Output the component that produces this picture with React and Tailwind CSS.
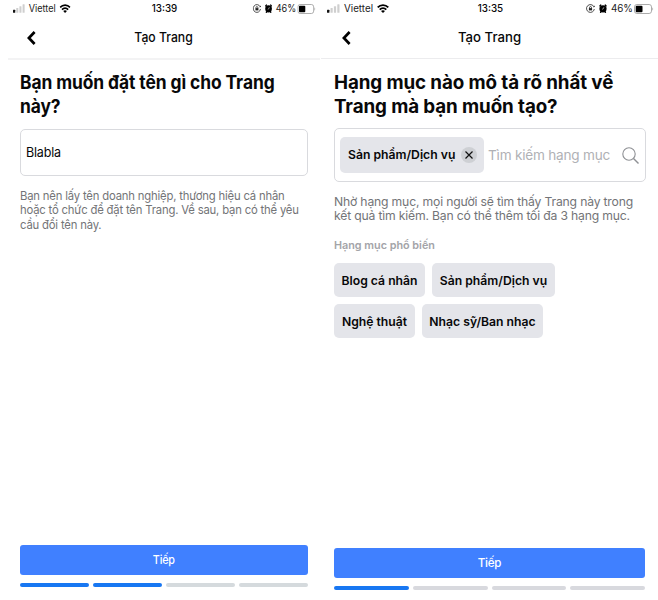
import clsx from 'clsx'

const Signal = () => (
  <svg width="13" height="9" viewBox="0 0 13 9">
    <rect x="0" y="5.8" width="2.4" height="3" rx=".5" fill="#111" />
    <rect x="3.5" y="4" width="2.2" height="4.8" rx=".5" fill="#cfcfcf" />
    <rect x="6.9" y="2.2" width="2.2" height="6.6" rx=".5" fill="#cfcfcf" />
    <rect x="10.3" y="0.3" width="2.2" height="8.5" rx=".5" fill="#cfcfcf" />
  </svg>
)

const Wifi = () => (
  <svg width="12" height="9" viewBox="0 0 12 9" fill="none" stroke="#000" strokeWidth="1.8">
    <path d="M.7 3.3C3.6.3 8.4.3 11.3 3.3" />
    <path d="M2.7 5.6C4.6 3.7 7.4 3.7 9.3 5.6" />
    <path d="M6 9 4 7.1c1.1-1.1 2.9-1.1 4 0z" fill="#000" stroke="none" />
  </svg>
)

const RotationLock = () => (
  <svg width="9" height="9" viewBox="0 0 9 9" fill="none" stroke="#222" strokeWidth=".8">
    <path d="M7.9 2.7A3.9 3.9 0 1 0 8.3 5" />
    <path d="M8.9 3.1 7 3.3 8.3 1.5z" fill="#222" stroke="none" />
    <rect x="2.9" y="4.1" width="3.2" height="2.3" fill="#222" stroke="none" />
    <path d="M3.5 4.2v-.6a1 1 0 0 1 2 0v.6" />
  </svg>
)

const Alarm = () => (
  <svg width="8" height="9" viewBox="0 0 8 9">
    <circle cx="4" cy="4.8" r="3.6" fill="#000" />
    <path d="M.9 1.9 1.8 1.1M7.1 1.9 6.2 1.1M1.6 8.2l.5-.6M6.4 8.2l-.5-.6" stroke="#000" strokeWidth="1.4" strokeLinecap="round" />
    <path d="M4.9 3.2 4.1 5l-1 .3" stroke="#ddd" strokeWidth=".6" fill="none" />
  </svg>
)

const Battery = () => (
  <svg width="20" height="10" viewBox="0 0 20 10">
    <rect x=".5" y=".5" width="17" height="9" rx="2.4" fill="#fff" stroke="#a2a2a2" strokeWidth=".9" />
    <rect x="1.7" y="1.8" width="6.8" height="6.4" rx="1" fill="#000" />
    <path d="M18.4 3.4v3.2c1-.3 1-2.9 0-3.2z" fill="#a2a2a2" />
  </svg>
)

const StatusBar = ({ time, className, side }) => (
  <div className={clsx('grid grid-cols-[1fr_auto_1fr] items-center h-[17px] text-[9.8px] leading-none', className)}>
    <div className={clsx('flex items-center origin-left', side)}>
      <Signal />
      <span className="ml-1 mr-1 text-[#222]">Viettel</span>
      <Wifi />
    </div>
    <div className="font-medium">{time}</div>
    <div className={clsx('flex items-center justify-end origin-right', side)}>
      <RotationLock />
      <span className="ml-1 mr-1 flex"><Alarm /></span>
      <span className="mr-px text-[#222]">46%</span>
      <Battery />
    </div>
  </div>
)

const TitleBar = ({ className, titleClass }) => (
  <div className={clsx('grid grid-cols-[1fr_auto_1fr] items-center h-[41px]', className)}>
    <svg width="9" height="14" viewBox="0 0 9 14" fill="none" stroke="#000" strokeWidth="2.7">
      <path d="M7.6 1 1.9 7l5.7 6" />
    </svg>
    <div className={clsx('text-[13.2px] leading-none font-medium whitespace-nowrap', titleClass)}>Tạo Trang</div>
    <div />
  </div>
)

// lines are broken by hand, they must not wrap on their own
const Lines = ({ lines, className }) => (
  <div className={clsx('whitespace-nowrap', className)}>
    {lines.map(text => (
      <div key={text}>{text}</div>
    ))}
  </div>
)

const Chip = ({ children, className }) => (
  <div className={clsx('flex items-center rounded-[5px] bg-[#e4e5ea] text-[12.2px] font-semibold whitespace-nowrap', className)}>
    {children}
  </div>
)

const Footer = ({ step, className, label, off }) => (
  <div className={className}>
    <button className="block w-full h-[30px] rounded-[3px] bg-[#4080ff] pt-0.5 text-white text-[11.6px] font-medium">
      <span className={clsx('inline-block tracking-[-0.2px]', label)}>Tiếp</span>
    </button>
    <div className="mt-2 grid grid-cols-4 gap-1">
      {[1, 2, 3, 4].map(n => (
        <div key={n} className={clsx('h-1 rounded-full', n <= step ? 'bg-[#1877f2]' : off)} />
      ))}
    </div>
  </div>
)

// this screen is slightly squeezed horizontally
const NameScreen = () => (
  <div className="flex flex-col w-[321px] h-full">
    <StatusBar time="13:39" side="scale-x-[0.93]" className="pl-[13px] pr-[5px]" />
    <TitleBar className="pl-[27px] pr-[20px]" titleClass="scale-x-[0.925]" />
    <div className="ml-2 h-0.5 w-[312px] bg-[#f3f3f4]" />
    <div className="pl-5 pr-[13px] pt-[11px]">
      <Lines
        className="origin-left scale-x-[0.927] text-[18.8px] leading-[23.5px] font-bold tracking-[-0.1px]"
        lines={['Bạn muốn đặt tên gì cho Trang', 'này?']}
      />
      <div className="mt-[11px] flex h-[47px] items-center rounded-[5px] border border-[#d9dade] px-[5px]">
        <span className="origin-left scale-x-[0.927] text-[13.5px] tracking-[-0.2px]">Blabla</span>
      </div>
      <Lines
        className="mt-[12.5px] origin-left scale-x-[0.927] text-[12.2px] leading-[14.7px] tracking-[-0.2px] text-[#737477]"
        lines={[
          'Bạn nên lấy tên doanh nghiệp, thương hiệu cá nhân',
          'hoặc tổ chức để đặt tên Trang. Về sau, bạn có thể yêu',
          'cầu đổi tên này.',
        ]}
      />
    </div>
    <Footer step={2} label="scale-x-[0.93]" off="bg-[#d5dadd]" className="mt-auto mb-[13px] ml-5 mr-[13px]" />
  </div>
)

const CategoryScreen = () => (
  <div className="flex flex-col flex-1 h-full">
    <StatusBar time="13:35" className="pl-[6px] pr-[4px]" />
    <TitleBar className="pl-[21px] pr-[21px]" />
    <div className="h-px mb-px bg-[#ececee]" />
    <div className="pl-[13px] pr-[12px] pt-[11px]">
      <Lines
        className="text-[18.8px] leading-[23.5px] font-bold tracking-[-0.1px]"
        lines={['Hạng mục nào mô tả rõ nhất về', 'Trang mà bạn muốn tạo?']}
      />
      <div className="mt-2.5 flex h-[54px] items-center rounded-[5px] border border-[#d9dade] pl-[5px] pr-1.5">
        <Chip className="h-9 w-36 justify-between pl-2 pr-[7px]">
          <span>Sản phẩm/Dịch vụ</span>
          <svg width="16" height="16" viewBox="0 0 16 16">
            <circle cx="8" cy="8" r="8" fill="#ced0d4" />
            <path d="m4.5 4.5 7 7m0-7-7 7" stroke="#111" strokeWidth="1.2" />
          </svg>
        </Chip>
        <span className="ml-1 text-[13.6px] tracking-[-0.22px] whitespace-nowrap text-[#b0b1b5]">Tìm kiếm hạng mục</span>
        <svg className="ml-auto" width="17" height="17" viewBox="0 0 17 17" fill="none" stroke="#8e9094" strokeWidth="1.1">
          <circle cx="7" cy="7" r="6.2" />
          <path d="m11.5 11.5 5 5" strokeWidth="1.4" />
        </svg>
      </div>
      <Lines
        className="mt-[12.5px] text-[12.2px] leading-[14.7px] tracking-[-0.18px] text-[#737477]"
        lines={[
          'Nhờ hạng mục, mọi người sẽ tìm thấy Trang này trong',
          'kết quả tìm kiếm. Bạn có thể thêm tối đa 3 hạng mục.',
        ]}
      />
      <div className="mt-[15px] text-[10.8px] leading-[14px] font-semibold text-[#a3a4a8]">Hạng mục phổ biến</div>
      <div className="mt-2.5 flex gap-[7px]">
        <Chip className="h-[34px] w-[91px] justify-center pt-0.5">Blog cá nhân</Chip>
        <Chip className="h-[34px] w-[123px] justify-center pt-0.5">Sản phẩm/Dịch vụ</Chip>
      </div>
      <div className="mt-[7px] flex gap-[7px]">
        <Chip className="h-[34px] w-[81px] justify-center pt-0.5">Nghệ thuật</Chip>
        <Chip className="h-[34px] w-[121px] justify-center pt-0.5">Nhạc sỹ/Ban nhạc</Chip>
      </div>
    </div>
    <Footer step={1} off="bg-[#d8d9de]" className="mt-auto mb-[10px] ml-[13px] mr-[13px]" />
  </div>
)

export default function App() {
  return (
    <div className="flex h-[600px] w-[658px] overflow-hidden bg-white font-['Inter','Liberation_Sans',sans-serif] text-[#080809]">
      <NameScreen />
      <CategoryScreen />
    </div>
  )
}
